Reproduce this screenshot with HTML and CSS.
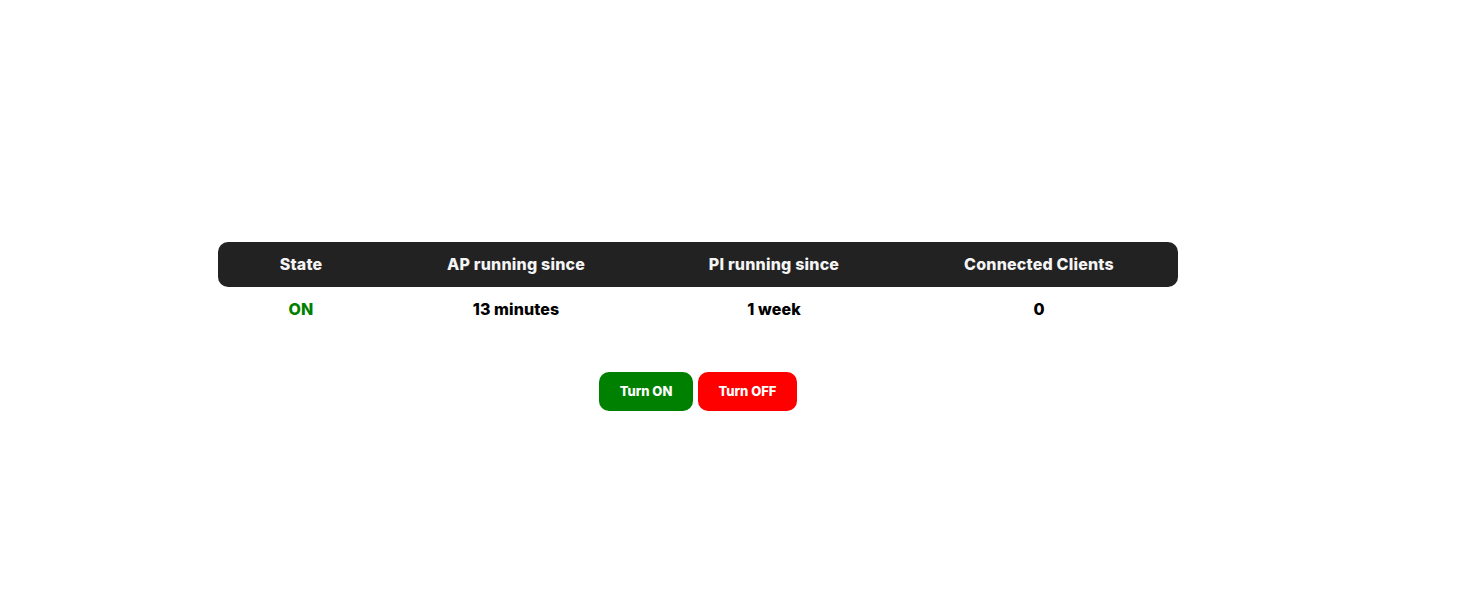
FILE: index.html
```html
<!DOCTYPE html>
<html>
<head>
<meta charset="utf-8">
<link rel="stylesheet" href="styles.css">
</head>
<body>
<main class="page">
  <div class="status">
    <div class="row head">
      <div class="cell c1">State</div>
      <div class="cell c2">AP running since</div>
      <div class="cell c3">PI running since</div>
      <div class="cell c4">Connected Clients</div>
    </div>
    <div class="row data">
      <div class="cell c1 on">ON</div>
      <div class="cell c2">13 minutes</div>
      <div class="cell c3">1 week</div>
      <div class="cell c4">0</div>
    </div>
  </div>
  <div class="actions">
    <button class="btn btn-on">Turn ON</button>
    <button class="btn btn-off">Turn OFF</button>
  </div>
</main>
</body>
</html>
```
FILE: styles.css
```css
html, body {
  margin: 0;
  padding: 0;
  background: #fff;
}
body {
  font-family: Inter, "Noto Sans", sans-serif;
  font-weight: 800;
  color: #000;
}
.page {
  width: 960px;
  margin-left: 218px;
  padding-top: 242px;
}
.row {
  display: grid;
  grid-template-columns: 166px 264px 252px 278px;
}
.head {
  background: #222;
  color: #f4f4f4;
  border-radius: 10px;
  height: 45px;
  box-sizing: border-box;
  padding-bottom: 2px;
  align-items: center;
  font-size: 16px;
  letter-spacing: 0.2px;
}
.data {
  height: 44px;
  align-items: center;
  font-size: 16px;
  letter-spacing: 0.1px;
}
.cell {
  text-align: center;
}
.on {
  color: #008000;
}
.actions {
  display: flex;
  justify-content: center;
  gap: 5px;
  margin-top: 41px;
}
.btn {
  font-family: inherit;
  font-weight: 800;
  font-size: 13px;
  color: #fff;
  border: none;
  border-radius: 10px;
  height: 39px;
  padding: 0 0 2px;
}
.btn-on { background: #008000; width: 94px; }
.btn-off { background: #ff0000; width: 99px; }
```
